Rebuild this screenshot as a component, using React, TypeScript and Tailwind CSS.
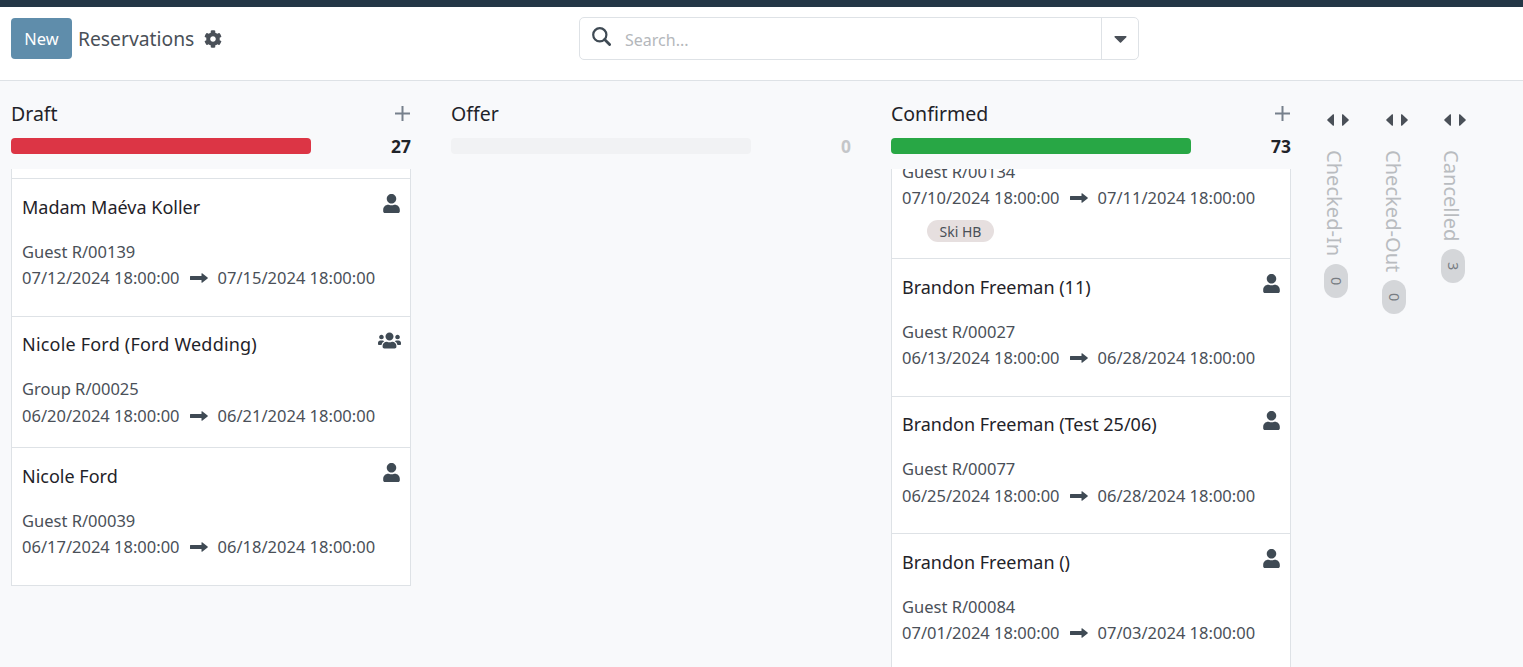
import { FaCog, FaCaretDown, FaUser, FaUsers } from "react-icons/fa";

type Card = { name: string; kind: string; from: string; to: string; group?: boolean; tight?: boolean; h: string };

const draft: Card[] = [
  { name: "Madam Maéva Koller", kind: "Guest R/00139", from: "07/12/2024 18:00:00", to: "07/15/2024 18:00:00", h: "h-[138px]" },
  { name: "Nicole Ford (Ford Wedding)", kind: "Group R/00025", from: "06/20/2024 18:00:00", to: "06/21/2024 18:00:00", group: true, tight: true, h: "h-[131px]" },
  { name: "Nicole Ford", kind: "Guest R/00039", from: "06/17/2024 18:00:00", to: "06/18/2024 18:00:00", h: "h-[138px]" },
];
const confirmed: Card[] = [
  { name: "Brandon Freeman (11)", kind: "Guest R/00027", from: "06/13/2024 18:00:00", to: "06/28/2024 18:00:00", h: "h-[138px]" },
  { name: "Brandon Freeman (Test 25/06)", kind: "Guest R/00077", from: "06/25/2024 18:00:00", to: "06/28/2024 18:00:00", tight: true, h: "h-[137px]" },
  { name: "Brandon Freeman ()", kind: "Guest R/00084", from: "07/01/2024 18:00:00", to: "07/03/2024 18:00:00", h: "h-[138px]" },
];

function Dates({ from, to }: { from: string; to: string }) {
  return (
    <div className="flex items-center h-[26px] text-[16.5px] text-[#4a5058]">
      <span>{from}</span>
      <svg width="18" height="10" viewBox="0 0 18 10" className="mx-[10px] shrink-0">
        <path d="M0.5 3H11.5V0.6a.4.4 0 0 1 .65-.3L17.6 4.6a.5.5 0 0 1 0 .8L12.15 9.7a.4.4 0 0 1-.65-.3V7H0.5a.5.5 0 0 1-.5-.5v-3a.5.5 0 0 1 .5-.5z" fill="#3f4a54" />
      </svg>
      <span>{to}</span>
    </div>
  );
}

function KCard({ c }: { c: Card }) {
  return (
    <div className={`${c.h} shrink-0 bg-white border-b border-[#dee2e6] px-[10px] ${c.tight ? "pt-[13px]" : "pt-[14px]"}`}>
      <div className="flex justify-between h-[28px]">
        <span className={`text-[18px] leading-[28px] text-[#1f2329] ${c.group ? "tracking-[0.2px]" : ""}`}>{c.name}</span>
        {c.group ? (
          <FaUsers className="text-[#3f4a54] text-[23px] -mr-[1px] -mt-[1px]" />
        ) : (
          <FaUser className="text-[#3f4a54] text-[19px] -mr-[1px] mt-[1px]" />
        )}
      </div>
      <div className="mt-[18px] h-[26px] leading-[26px] text-[16.5px] text-[#4a5058]">{c.kind}</div>
      <div className={c.tight ? "mt-[1px]" : ""}>
        <Dates from={c.from} to={c.to} />
      </div>
    </div>
  );
}

function Header({ title, count, bar, muted, plus }: { title: string; count: string; bar: string; muted?: boolean; plus?: boolean }) {
  return (
    <div className="h-[88px] pt-[18px]">
      <div className="flex items-center justify-between h-[30px]">
        <span className="text-[19.5px] text-[#1f2329]">{title}</span>
        {plus && (
          <svg width="15" height="15" viewBox="0 0 15 15" className="mr-[1px] -mt-[2px]">
            <path d="M7.5 0v15M0 7.5h15" stroke="#76808c" strokeWidth="2" fill="none" />
          </svg>
        )}
      </div>
      <div className="flex items-center justify-between mt-[9px] h-[16px]">
        <div className={`w-[300px] h-[16px] rounded-[4px] ${bar}`} />
        <span className={`text-[17.4px] font-bold ${muted ? "text-[#c4c6c9]" : "text-[#1f2329]"}`}>{count}</span>
      </div>
    </div>
  );
}

function Folded({ label, count }: { label: string; count: string }) {
  return (
    <div className="w-[58.5px] flex flex-col items-center pt-[33px] text-[#b9bcc0]">
      <div className="flex gap-[8px] h-[12px] items-center">
        <svg width="7" height="12" viewBox="0 0 7 12">
          <path d="M7 .8v10.4a.6.6 0 0 1-1 .45L.4 6.5a.7.7 0 0 1 0-1L6 .35a.6.6 0 0 1 1 .45z" fill="#4a5058" />
        </svg>
        <svg width="7" height="12" viewBox="0 0 7 12">
          <path d="M0 .8v10.4a.6.6 0 0 0 1 .45L6.6 6.5a.7.7 0 0 0 0-1L1 .35a.6.6 0 0 0-1 .45z" fill="#4a5058" />
        </svg>
      </div>
      <div className="mt-[24px] [writing-mode:vertical-rl] text-[20.1px] leading-[24px] -ml-[8px]">{label}</div>
      <div className="mt-[8px] -ml-[5px] w-[24px] h-[34px] rounded-full bg-[#d4d6d9] flex items-center justify-center [writing-mode:vertical-rl] text-[14.5px] text-[#777c82]">
        {count}
      </div>
    </div>
  );
}

export default function App() {
  return (
    <div className="h-[667px] overflow-hidden bg-[#f8f9fb] font-['Noto_Sans',sans-serif]">
      <div className="h-[7px] bg-[#243746]" />
      <div className="h-[74px] bg-white border-b border-[#dee2e6] grid grid-cols-[568px_560px_1fr] items-start pt-[10px] px-[11px]">
        <div className="flex items-center h-[43px]">
          <button className="h-[41px] w-[61px] rounded-[4px] bg-[#5f8dab] text-white text-[16.4px] pt-[2px]">New</button>
          <span className="ml-[6px] text-[19.3px] text-[#4a5058] pt-[2px]">Reservations</span>
          <FaCog className="ml-[10px] text-[18px] text-[#4a5058]" />
        </div>
        <div className="flex h-[43px] bg-white border border-[#dee2e6] rounded-[5px]">
          <div className="flex-1 flex items-center pl-[12px] border-r border-[#dee2e6]">
            <svg width="19" height="19" viewBox="0 0 19 19" className="-mt-[4px]">
              <circle cx="7.8" cy="7.8" r="6.6" fill="none" stroke="#3f4a54" strokeWidth="2.2" />
              <path d="M12.6 12.6L17.6 17.6" stroke="#3f4a54" strokeWidth="2.8" strokeLinecap="round" />
            </svg>
            <span className="ml-[14px] text-[16px] text-[#b4b7bb] pt-[2px]">Search...</span>
          </div>
          <div className="w-[36px] flex items-center justify-center text-[#4a5058] text-[21px]">
            <FaCaretDown />
          </div>
        </div>
        <div />
      </div>
      <div className="flex pl-[11px]">
        <div className="w-[400px] mr-[40px]">
          <Header title="Draft" count="27" bar="bg-[#dc3545]" plus />
          <div className="h-[417px] overflow-hidden">
            <div className="border-x border-[#dee2e6]">
              <div className="h-[10px] bg-white border-b border-[#dee2e6]" />
              {draft.map((c) => (
                <KCard key={c.kind} c={c} />
              ))}
            </div>
          </div>
        </div>
        <div className="w-[400px] mr-[40px]">
          <Header title="Offer" count="0" bar="bg-[#f1f2f4]" muted />
        </div>
        <div className="w-[400px]">
          <Header title="Confirmed" count="73" bar="bg-[#28a745]" plus />
          <div className="h-[498px] overflow-hidden">
            <div className="border-x border-[#dee2e6] -mt-[10px]">
              <div className="h-[100px] bg-white border-b border-[#dee2e6] px-[10px]">
                <div className="h-[26px] leading-[26px] text-[16.5px] text-[#4a5058]">Guest R/00134</div>
                <Dates from="07/10/2024 18:00:00" to="07/11/2024 18:00:00" />
                <div className="mt-[9px] ml-[25px] w-[67px] h-[22px] rounded-full bg-[#e6dfdf] flex items-center justify-center text-[14px] text-[#4a5058]">Ski HB</div>
              </div>
              {confirmed.map((c) => (
                <KCard key={c.kind} c={c} />
              ))}
            </div>
          </div>
        </div>
        <div className="flex ml-[18px]">
          <Folded label="Checked-In" count="0" />
          <Folded label="Checked-Out" count="0" />
          <Folded label="Cancelled" count="3" />
        </div>
      </div>
    </div>
  );
}
